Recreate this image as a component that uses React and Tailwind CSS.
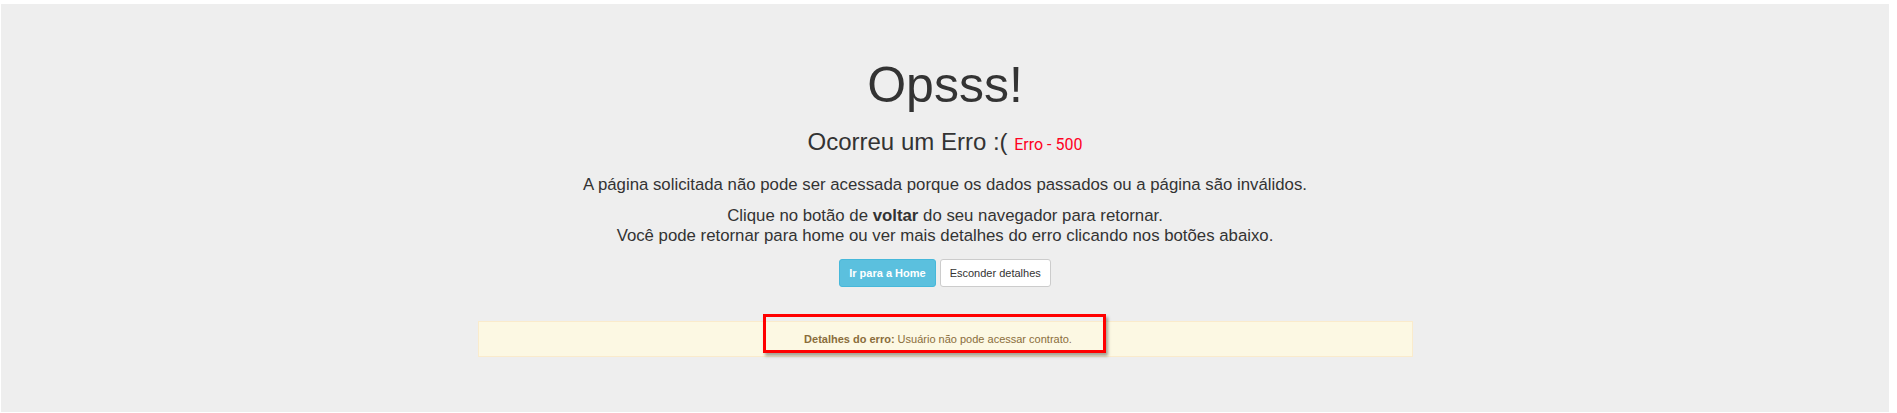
export default function App() {
  const sans = { fontFamily: '"Liberation Sans", Arial, sans-serif' };
  return (
    <div className="w-full h-[413px] bg-white pt-[4px] pl-[1px] pr-[8px] pb-[1px]" style={sans}>
      <div className="h-full bg-[#eeeeee] flex flex-col items-center text-[#333333] pt-[54px]">
        <h1 className="text-[50px] leading-[55px] font-normal m-0">Opsss!</h1>
        <h2 className="mt-[16px] text-[24px] leading-[26px] font-normal">
          Ocorreu um Erro :({' '}
          <span className="text-[16px] text-[#ff0022]" style={{ fontFamily: 'Roboto, "Open Sans", sans-serif' }}>
            Erro - 500
          </span>
        </h2>
        <p className="mt-[17px] text-[16.8px] leading-[20px] text-center">
          A página solicitada não pode ser acessada porque os dados passados ou a página são inválidos.
        </p>
        <p className="mt-[11px] text-[16.8px] leading-[20px] text-center">
          Clique no botão de <b>voltar</b> do seu navegador para retornar.
          <br />
          Você pode retornar para home ou ver mais detalhes do erro clicando nos botões abaixo.
        </p>
        <div className="mt-[13px] flex gap-[4px]">
          <button className="h-[28px] px-[9px] text-[11px] font-bold text-white bg-[#5bc0de] border border-[#46b8da] rounded-[3px]">
            Ir para a Home
          </button>
          <button className="h-[28px] px-[9px] text-[11px] text-[#333333] bg-white border border-[#cccccc] rounded-[3px]">
            Esconder detalhes
          </button>
        </div>
        <div className="relative mt-[34px] w-[935px] h-[36px] bg-[#fcf8e3] border border-[#faebcc] flex items-center justify-center pr-[14px] text-[11px] text-[#8a6d3b]">
          <span>
            <b>Detalhes do erro:</b> Usuário não pode acessar contrato.
          </span>
          <div className="absolute left-[284px] top-[-8px] w-[343px] h-[39px] border-[3px] border-[#ff0000] shadow-[2px_3px_3px_rgba(0,0,0,0.35)]"></div>
        </div>
      </div>
    </div>
  );
}
